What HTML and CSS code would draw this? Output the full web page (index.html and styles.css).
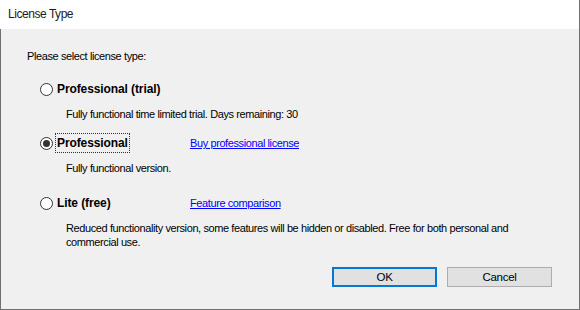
FILE: index.html
```html
<!DOCTYPE html>
<html>
<head>
<meta charset="utf-8">
<link rel="stylesheet" href="styles.css">
</head>
<body>
<div class="dialog">
  <div class="titlebar">License Type</div>
  <div class="content">
    <div class="prompt">Please select license type:</div>

    <div class="option opt1">
      <span class="radio"></span>
      <span class="label"><span class="label-text">Professional (trial)</span></span>
    </div>
    <div class="desc d1">Fully functional time limited trial. Days remaining: 30</div>

    <div class="option opt2">
      <span class="radio checked"></span>
      <span class="label"><span class="label-text focused">Professional</span></span>
      <a class="link" href="#">Buy professional license</a>
    </div>
    <div class="desc d2">Fully functional version.</div>

    <div class="option opt3">
      <span class="radio"></span>
      <span class="label"><span class="label-text">Lite (free)</span></span>
      <a class="link" href="#">Feature comparison</a>
    </div>
    <div class="desc d3">Reduced functionality version, some features will be hidden or disabled. Free for both personal and commercial use.</div>

    <div class="buttons">
      <button class="btn default">OK</button>
      <button class="btn">Cancel</button>
    </div>
  </div>
</div>
</body>
</html>
```

FILE: styles.css
```css
html, body {
  margin: 0;
  padding: 0;
  width: 580px;
  height: 310px;
  overflow: hidden;
  background: #f0f0f0;
}
.dialog {
  width: 580px;
  height: 310px;
  box-sizing: border-box;
  display: flex;
  flex-direction: column;
  font-family: "Liberation Sans", Arial, sans-serif;
  color: #000;
}
.titlebar {
  height: 29px;
  line-height: 29px;
  background: #fff;
  padding-left: 8px;
  font-size: 12px;
  letter-spacing: -0.45px;
  color: #1a1a1a;
  border-right: 1px solid #707070;
  box-sizing: border-box;
}
.content {
  flex: 1;
  background: #f0f0f0;
  border-left: 1px solid #707070;
  border-right: 1px solid #707070;
  border-bottom: 1px solid #707070;
  padding-top: 20px;
  padding-left: 24px;
  font-size: 11px;
  letter-spacing: -0.4px;
  display: flex;
  flex-direction: column;
}
.prompt {
  line-height: 14px;
  height: 14px;
  padding-left: 2px;
}
.option {
  height: 18px;
  display: flex;
  align-items: center;
  padding-left: 15px;
}
.opt1 { margin-top: 17px; }
.opt2 { margin-top: 13px; }
.opt3 { margin-top: 19px; }
.radio {
  width: 13px;
  height: 13px;
  box-sizing: border-box;
  border: 1px solid #333;
  border-radius: 50%;
  background: #fff;
  display: flex;
  align-items: center;
  justify-content: center;
  flex: none;
}
.radio.checked::after {
  content: "";
  width: 7px;
  height: 7px;
  border-radius: 50%;
  background: #333;
}
.label {
  margin-left: 4px;
  width: 133px;
  flex: none;
  display: flex;
}
.label-text {
  font-weight: bold;
  font-size: 12px;
  line-height: 16px;
  letter-spacing: -0.1px;
}
.label-text.focused {
  outline: 1px dotted #333;
  outline-offset: 1px;
}
.link {
  color: #0000ff;
  text-decoration: underline;
  font-size: 11px;
  line-height: 14px;
}
.desc {
  margin-top: 9px;
  padding-left: 41px;
  line-height: 14px;
  width: 460px;
}
.buttons {
  margin-top: 18px;
  display: flex;
  gap: 10px;
  padding-left: 307px;
}
.btn {
  width: 105px;
  height: 20px;
  box-sizing: border-box;
  margin: 0;
  padding: 0;
  background: #e1e1e1;
  border: 1px solid #adadad;
  font-family: "Liberation Sans", Arial, sans-serif;
  font-size: 11.5px;
  letter-spacing: -0.3px;
  color: #000;
}
.btn.default {
  border: 1px solid #0078d7;
  box-shadow: inset 0 0 0 1px #0078d7;
}
```
